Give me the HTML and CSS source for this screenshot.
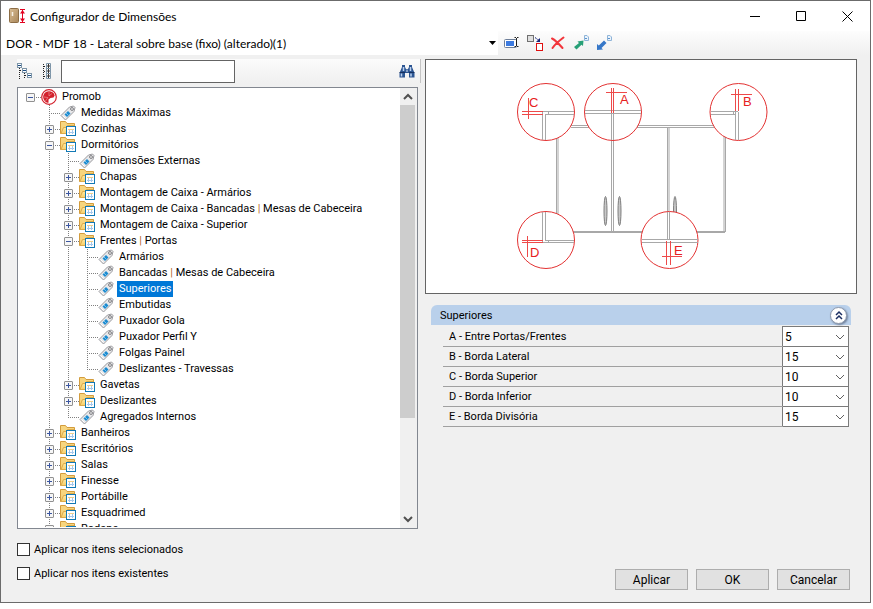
FILE: index.html
```html
<!DOCTYPE html>
<html lang="pt-BR">
<head>
  <meta charset="UTF-8">
  <title>Configurador de Dimensões</title>
  <meta name="viewport" content="width=device-width, initial-scale=1.0">
  <link rel="stylesheet" href="styles.css">
</head>
<body>
<svg class="sprites" aria-hidden="true">
  <defs>
    <linearGradient id="gold" x1="0" y1="0" x2="0" y2="1"><stop offset="0" stop-color="#fff0b8"/><stop offset="1" stop-color="#f8cf66"/></linearGradient>
    <linearGradient id="door" x1="0" y1="0" x2="1" y2="1"><stop offset="0" stop-color="#d9bd94"/><stop offset="1" stop-color="#a9875a"/></linearGradient>
  </defs>
  <symbol id="folder" viewBox="0 0 16 16">
    <path d="M.5 12.500V.5H5.500L7 2.500H14.500V12.500Z" fill="#f7d57e" stroke="#d39c3d"/>
    <path d="M1 12.500L3.500 6.500H6L7.500 4.500H14V12.500Z" fill="url(#gold)" stroke="#dcab4a"/>
    <rect x="6.500" y="5.500" width="9" height="9" fill="#fff" stroke="#1279b5"/>
    <path d="M8 11.500H14M9.500 8V13M12.500 8V13" stroke="#a5c8ec" fill="none"/>
    <path d="M8 8.500H14" stroke="#f0cf88"/>
  </symbol>
  <symbol id="tag" viewBox="0 0 16 16">
    <path d="M1 10.500L9.500 2L13.500 1L15 2.500L14 6.500L5.500 15Z" fill="#e8e8ea" stroke="#9a9a9e"/>
    <path d="M2.500 10.500L5.500 13.500" stroke="#fff"/>
    <path d="M4.500 9.500L8 6L10.500 8.500L7 12Z" fill="#1c8bd0"/>
    <path d="M6 8L8.500 10.500" stroke="#7cc1ea"/>
    <circle cx="12" cy="4" r="1.400" fill="#fff" stroke="#77777b"/>
  </symbol>
</svg>

<div class="window">
  <header class="titlebar">
    <svg class="app-icon" width="18" height="16" viewBox="0 0 18 16">
      <rect x=".5" y=".5" width="9" height="14" rx="1" fill="url(#door)" stroke="#8c6d45"/>
      <path d="M3.500 4V8" stroke="#f7f0e4" stroke-width="1.500"/>
      <path d="M11 1.500H16M11 14.500H16M13.500 2V14" stroke="#e2001f"/>
      <path d="M13.500 2L16 5.500H11ZM13.500 14L16 10.500H11Z" fill="#e2001f"/>
    </svg>
    <h1>Configurador de Dimensões</h1>
    <button class="win-btn" aria-label="Minimizar"><svg width="11" height="11"><path d="M0 5.500H10" stroke="#000"/></svg></button>
    <button class="win-btn" aria-label="Maximizar"><svg width="11" height="11"><path d="M.5 .5H9.500V9.500H.5Z" stroke="#000" fill="none"/></svg></button>
    <button class="win-btn" aria-label="Fechar"><svg width="11" height="11"><path d="M.5 .5L10.500 10.500M10.500 .5L.5 10.500" stroke="#000" fill="none"/></svg></button>
  </header>

  <div class="toolbar">
    <select class="model" aria-label="Modelo">
      <option>DOR - MDF 18 - Lateral sobre base (fixo) (alterado)(1)</option>
    </select>
    <button class="tool" aria-label="Renomear">
      <svg width="17" height="16" viewBox="0 0 17 16"><rect x=".5" y="4.500" width="12" height="8" rx="1" fill="#fff" stroke="#6e7f99"/><rect x="2" y="6" width="8" height="5" fill="#3d7be0"/><path d="M10.500 2.500H12M13 2.500H14.500M12.500 3V11M10.500 11.500H12M13 11.500H14.500" stroke="#222"/></svg>
    </button>
    <button class="tool" aria-label="Substituir">
      <svg width="17" height="16" viewBox="0 0 17 16"><rect x=".5" y=".5" width="6" height="6" fill="#e0e0e0" stroke="#707070"/><rect x="9.500" y="8.500" width="6" height="7" fill="#fff" stroke="#e01010"/><path d="M8 2.500L12 5.500" stroke="#16267c" stroke-dasharray="2 1"/><path d="M13 3V7H9Z" fill="#16267c"/></svg>
    </button>
    <button class="tool" aria-label="Excluir">
      <svg width="17" height="16" viewBox="0 0 17 16"><path d="M2 3.500C5 5 9 9 12.500 13M13.500 2.500C9 6 5 9 2.500 13" stroke="#f2363c" stroke-width="2" stroke-linecap="round" fill="none"/></svg>
    </button>
    <button class="tool" aria-label="Exportar">
      <svg width="17" height="16" viewBox="0 0 17 16"><path d="M1 12L6 8L4.500 6.500L10.500 5.500L10 11L8.500 9.800L3.500 14.500Z" fill="#27a077"/><path d="M11.500 .5H14L15.500 2V5.500H11.500Z" fill="#eaf3fc" stroke="#8fb4d8"/><path d="M12 3.500H14" stroke="#5c94cd"/></svg>
    </button>
    <button class="tool" aria-label="Importar">
      <svg width="17" height="16" viewBox="0 0 17 16"><path d="M1 15V9L2.800 10.500L8 5.500L10.500 8L5.500 13L7 14.500Z" fill="#3677c8"/><path d="M11.500 .5H14L15.500 2V5.500H11.500Z" fill="#eaf3fc" stroke="#8fb4d8"/><path d="M12 3.500H14" stroke="#5c94cd"/></svg>
    </button>
  </div>

  <main class="content">
    <section class="left">
      <div class="tree-bar">
        <button class="tool" aria-label="Recolher">
          <svg width="17" height="17" viewBox="0 0 17 17"><path d="M2.500 5V17M7.500 10V15" stroke="#222" stroke-dasharray="1 1"/><path d="M3 7.500H5M8 12.500H10" stroke="#222" stroke-dasharray="1 1"/><rect x=".5" y=".5" width="4" height="4" fill="#fff" stroke="#7d95a8"/><rect x="5.500" y="5.500" width="4" height="4" fill="#fff" stroke="#7d95a8"/><rect x="10.500" y="10.500" width="4" height="4" fill="#fff" stroke="#7d95a8"/><path d="M1 2.500H4M6 7.500H9M11 12.500H14" stroke="#1d4f86"/></svg>
        </button>
        <button class="tool" aria-label="Expandir">
          <svg width="17" height="17" viewBox="0 0 17 17"><path d="M4.500 1V16" stroke="#222" stroke-dasharray="1 1"/><path d="M5 3.500H7M5 8.500H7M5 13.500H7" stroke="#222" stroke-dasharray="1 1"/><path d="M7.500 .5H11.500V5.500H7.500ZM7.500 5.500H11.500V10.500H7.500ZM7.500 10.500H11.500V15.500H7.500Z" fill="#fff" stroke="#7d95a8"/><path d="M8 3H11M8 8H11M8 13H11M9.500 1V5M9.500 6V10M9.500 11V15" stroke="#333"/></svg>
        </button>
        <input class="search" type="text" aria-label="Pesquisar">
        <button class="tool find" aria-label="Localizar">
          <svg width="16" height="15" viewBox="0 0 16 15"><path d="M3 1H6V3L7 5H9L10 3V1H13V3L15.500 9V13.500H10V9H6V13.500H.5V9L3 3Z" fill="#2c5592"/><path d="M2.500 9.500V12.500M4.500 3V7M12 9.500V12.500M11.500 3V7" stroke="#bcd2f0" stroke-width="1.500"/><path d="M.5 8.500H6M10 8.500H15.500" stroke="#16305e"/><path d="M8 5.500V8" stroke="#dfe9f8"/></svg>
        </button>
      </div>

      <div class="tree-box">
        <ul class="tree">
          <li>
            <div class="row"><button class="exp open"></button>
              <svg class="ico" viewBox="0 0 16 16"><circle cx="8" cy="8" r="7.300" fill="#fff" stroke="#d3202c" stroke-width="1.200"/><path d="M8 2.200C4 2.200 2 5.300 2.200 8.500C2.500 11.500 5 13.800 7.500 13.800V10.500L9.500 9L12.500 8.500L13.700 6.500C13 3.500 10.500 2.200 8 2.200Z" fill="#d3202c"/><path d="M8 3V7L11 4.500M3 8L7 8.500L4.500 12" stroke="#f2a0a4" stroke-width=".6" fill="none"/></svg>
              <span class="label">Promob</span></div>
            <ul>
              <li><div class="row"><svg class="ico"><use href="#tag"/></svg><span class="label">Medidas Máximas</span></div></li>
              <li><div class="row"><button class="exp"></button><svg class="ico"><use href="#folder"/></svg><span class="label">Cozinhas</span></div></li>
              <li>
                <div class="row"><button class="exp open"></button><svg class="ico"><use href="#folder"/></svg><span class="label">Dormitórios</span></div>
                <ul>
                  <li><div class="row"><svg class="ico"><use href="#tag"/></svg><span class="label">Dimensões Externas</span></div></li>
                  <li><div class="row"><button class="exp"></button><svg class="ico"><use href="#folder"/></svg><span class="label">Chapas</span></div></li>
                  <li><div class="row"><button class="exp"></button><svg class="ico"><use href="#folder"/></svg><span class="label">Montagem de Caixa - Armários</span></div></li>
                  <li><div class="row"><button class="exp"></button><svg class="ico"><use href="#folder"/></svg><span class="label">Montagem de Caixa - Bancadas <i>|</i> Mesas de Cabeceira</span></div></li>
                  <li><div class="row"><button class="exp"></button><svg class="ico"><use href="#folder"/></svg><span class="label">Montagem de Caixa - Superior</span></div></li>
                  <li>
                    <div class="row"><button class="exp open"></button><svg class="ico"><use href="#folder"/></svg><span class="label">Frentes <i>|</i> Portas</span></div>
                    <ul>
                      <li><div class="row"><svg class="ico"><use href="#tag"/></svg><span class="label">Armários</span></div></li>
                      <li><div class="row"><svg class="ico"><use href="#tag"/></svg><span class="label">Bancadas <i>|</i> Mesas de Cabeceira</span></div></li>
                      <li><div class="row"><svg class="ico"><use href="#tag"/></svg><span class="label selected">Superiores</span></div></li>
                      <li><div class="row"><svg class="ico"><use href="#tag"/></svg><span class="label">Embutidas</span></div></li>
                      <li><div class="row"><svg class="ico"><use href="#tag"/></svg><span class="label">Puxador Gola</span></div></li>
                      <li><div class="row"><svg class="ico"><use href="#tag"/></svg><span class="label">Puxador Perfil Y</span></div></li>
                      <li><div class="row"><svg class="ico"><use href="#tag"/></svg><span class="label">Folgas Painel</span></div></li>
                      <li><div class="row"><svg class="ico"><use href="#tag"/></svg><span class="label">Deslizantes - Travessas</span></div></li>
                    </ul>
                  </li>
                  <li><div class="row"><button class="exp"></button><svg class="ico"><use href="#folder"/></svg><span class="label">Gavetas</span></div></li>
                  <li><div class="row"><button class="exp"></button><svg class="ico"><use href="#folder"/></svg><span class="label">Deslizantes</span></div></li>
                  <li><div class="row"><svg class="ico"><use href="#tag"/></svg><span class="label">Agregados Internos</span></div></li>
                </ul>
              </li>
              <li><div class="row"><button class="exp"></button><svg class="ico"><use href="#folder"/></svg><span class="label">Banheiros</span></div></li>
              <li><div class="row"><button class="exp"></button><svg class="ico"><use href="#folder"/></svg><span class="label">Escritórios</span></div></li>
              <li><div class="row"><button class="exp"></button><svg class="ico"><use href="#folder"/></svg><span class="label">Salas</span></div></li>
              <li><div class="row"><button class="exp"></button><svg class="ico"><use href="#folder"/></svg><span class="label">Finesse</span></div></li>
              <li><div class="row"><button class="exp"></button><svg class="ico"><use href="#folder"/></svg><span class="label">Portábille</span></div></li>
              <li><div class="row"><button class="exp"></button><svg class="ico"><use href="#folder"/></svg><span class="label">Esquadrimed</span></div></li>
              <li><div class="row"><button class="exp"></button><svg class="ico"><use href="#folder"/></svg><span class="label">Rodape</span></div></li>
            </ul>
          </li>
        </ul>
        <div class="scrollbar">
          <svg width="16" height="17"><path d="M4 11L8 7L12 11" stroke="#505050" stroke-width="2" fill="none"/></svg>
          <div class="track"><div class="thumb"></div></div>
          <svg width="16" height="17"><path d="M4 6L8 10L12 6" stroke="#505050" stroke-width="2" fill="none"/></svg>
        </div>
      </div>
    </section>

    <section class="right">
      <svg class="preview" viewBox="426 60 430 233">
        <g class="frame">
          <path d="M571 125.500H727M571 127.500H727M556.500 128V232M558 128V232M724 128V232M725.500 128V232M559 231.500H725M559 232.500H725"/>
          <path d="M611.500 128V232M613.500 128V232M667.500 127V232M669 127V232"/>
        </g>
        <g class="handle">
          <ellipse cx="605.500" cy="211" rx="1.500" ry="14.500"/>
          <ellipse cx="619.500" cy="211" rx="1.500" ry="14.500"/>
          <ellipse cx="675" cy="211" rx="1.500" ry="14.500"/>
        </g>
        <g class="lens">
          <circle cx="546" cy="112" r="28.500"/>
          <circle cx="613" cy="112" r="28.500"/>
          <circle cx="738.500" cy="112" r="28.500"/>
          <circle cx="546" cy="240" r="28.500"/>
          <circle cx="669.500" cy="240" r="28.500"/>
        </g>
        <g class="frame">
          <path d="M543 111.500H574M546 114.500H574M542.500 112V140M545.500 114V140M548.500 112V114"/>
          <path d="M585 110.500H641M585 113.500H641M611.500 113V140M613.500 113V140"/>
          <path d="M711 111.500H738M711 114.500H735M735.500 112V140M738.500 112V140M733.500 112V114"/>
          <path d="M543 242.500H574M546 240.500H574M542.500 212V242M545.500 212V241M548.500 240V242"/>
          <path d="M642 239.500H698M642 242.500H698M667.500 212V240M669.500 212V240"/>
        </g>
        <g class="mark">
          <path d="M522 111.500H543M522 114.500H543M528.500 98V119"/>
          <path d="M611.500 88V113M613.500 88V113M606 92.500H627"/>
          <path d="M735.500 89V111M738.500 89V111M731 94.500H752"/>
          <path d="M522 240.500H543M522 242.500H543M527.500 236V257"/>
          <path d="M666.500 241V265M670.500 241V265M662 256.500H682"/>
          <text x="529" y="107">C</text>
          <text x="620" y="104">A</text>
          <text x="743" y="106">B</text>
          <text x="530" y="257">D</text>
          <text x="674" y="255">E</text>
        </g>
      </svg>

      <div class="group">
        <h2>Superiores</h2>
        <button class="collapse" aria-label="Recolher grupo"><svg width="10" height="10"><path d="M2 5L5 2L8 5M2 9L5 6L8 9" stroke="#1c2f63" stroke-width="1.500" fill="none"/></svg></button>
      </div>
      <table class="props">
        <tr><th><label for="a">A - Entre Portas/Frentes</label></th><td><select id="a"><option>5</option></select></td></tr>
        <tr><th><label for="b">B - Borda Lateral</label></th><td><select id="b"><option>15</option></select></td></tr>
        <tr><th><label for="c">C - Borda Superior</label></th><td><select id="c"><option>10</option></select></td></tr>
        <tr><th><label for="d">D - Borda Inferior</label></th><td><select id="d"><option>10</option></select></td></tr>
        <tr><th><label for="e">E - Borda Divisória</label></th><td><select id="e"><option>15</option></select></td></tr>
      </table>
    </section>
  </main>

  <footer class="footer">
    <div class="checks">
      <label><input type="checkbox"> Aplicar nos itens selecionados</label>
      <label><input type="checkbox"> Aplicar nos itens existentes</label>
    </div>
    <div class="actions">
      <button>Aplicar</button>
      <button>OK</button>
      <button>Cancelar</button>
    </div>
  </footer>
</div>
</body>
</html>
```
FILE: styles.css
```css
* { box-sizing: border-box; }
body { margin: 0; padding: 0 2px 6px 0; height: 100vh; background: #fff; font-family: Roboto, "Liberation Sans", sans-serif; font-size: 11px; color: #000; }
button, select, input { font: inherit; color: inherit; margin: 0; }
svg { display: block; flex: none; }
.sprites { width: 0; height: 0; position: absolute; }

.window { display: flex; flex-direction: column; height: 100%; background: #f0f0f0; border: 1px solid #6b6b6b; }

.titlebar { display: flex; align-items: center; height: 30px; padding-left: 8px; background: #fff; }
.titlebar h1 { flex: 1; margin: 0 0 0 3px; font: 12px Lato, sans-serif; }
.win-btn { display: flex; align-items: center; justify-content: center; width: 46px; height: 28px; padding: 0; border: 0; background: none; }

.toolbar { display: flex; align-items: center; height: 24px; background: linear-gradient(#fdfdfd, #f0f0f0); }
.model {
  appearance: none; width: 497px; height: 24px; padding: 0 16px 0 5px; border: 0; border-radius: 0;
  font: 12px Lato, sans-serif;
  background: #fff url("data:image/svg+xml,%3Csvg xmlns='http://www.w3.org/2000/svg' width='7' height='4'%3E%3Cpath d='M0 0H7L3.5 4Z'/%3E%3C/svg%3E") no-repeat right 2px center;
}
.tool { display: flex; padding: 0; border: 0; background: none; }
.toolbar .tool { margin-left: 6px; }

.content { flex: 1; min-height: 0; display: grid; grid-template-columns: 404px 1fr; gap: 4px; padding: 4px 13px 0 16px; }
.left { display: flex; flex-direction: column; min-height: 0; }
.tree-bar { display: flex; align-items: center; gap: 5px; height: 24px; margin-bottom: 4px; padding-right: 5px; background: linear-gradient(#fbfbfb, #f0f0f0); border-right: 1px solid #c4c4c4; }
.search { width: 174px; height: 23px; padding: 0 4px; border: 1px solid #646464; background: #fff; }
.find { margin-left: auto; }

.tree-box { flex: 1; display: flex; min-height: 0; margin-right: 3px; border: 1px solid #828790; background: #fff; }
.tree { flex: 1; overflow: hidden; padding: 1px 0 0 8px; margin: 0 0 1px; list-style: none; }
.tree ul { padding: 0 0 0 19px; margin: 0; list-style: none; }
.tree ul > li { background: repeating-linear-gradient(#808080 0 1px, transparent 1px 2px) no-repeat 4px 0 / 1px 100%; }
.tree ul > li:last-child { background-size: 1px 8px; }
.row { display: flex; align-items: center; height: 16px; padding-left: 15px; background: repeating-linear-gradient(90deg, #808080 0 1px, transparent 1px 2px) no-repeat 4px 8px / 11px 1px; }
.exp { flex: none; width: 9px; height: 9px; margin: 0 6px 0 -15px; padding: 0; border: 1px solid #919191; border-radius: 1px; background: linear-gradient(#3b56a0, #3b56a0) no-repeat center / 5px 1px, linear-gradient(#3b56a0, #3b56a0) no-repeat center / 1px 5px, #f6f6f6; }
.exp.open { background: linear-gradient(#3b56a0, #3b56a0) no-repeat center / 5px 1px, #f6f6f6; }
.ico { width: 16px; height: 16px; margin-right: 3px; }
.label { padding: 0 2px; line-height: 16px; white-space: nowrap; }
.label i { font-style: normal; color: #b8692c; }
.selected { background: #0078d7; color: #fff; }

.scrollbar { display: flex; flex-direction: column; width: 17px; background: #f0f0f0; }
.track { flex: 1; }
.thumb { width: 15px; height: 77%; background: #cdcdcd; }

.right { display: flex; flex-direction: column; }
.preview { width: 100%; border: 1px solid #646464; background: #fff; }
.frame { stroke: #a8a8a8; fill: none; }
.handle { stroke: #7e7e7e; fill: #c8c8c8; }
.lens { stroke: #e33232; fill: #fff; }
.mark { stroke: #ee4a4a; fill: none; }
.mark text { font: 13px "Liberation Sans", sans-serif; fill: #e62020; stroke: none; }

.group { display: flex; align-items: center; height: 20px; margin: 11px 6px 0; padding: 0 4px 0 9px; border-radius: 6px 6px 0 0; background: #b9d0eb; }
.group h2 { flex: 1; margin: 0; font-size: 11px; font-weight: normal; }
.collapse { display: flex; align-items: center; justify-content: center; width: 17px; height: 17px; padding: 0; border: 1px solid #8d99ad; border-radius: 50%; background: #fff; box-shadow: 1px 1px 2px #6f7f99; }

.props { margin: 1px 8px 0 18px; border-collapse: collapse; }
.props th { height: 20px; padding: 0 0 0 6px; text-align: left; font-weight: normal; border-bottom: 1px solid #a0a0a0; }
.props td { width: 66px; padding: 0; border: 1px solid #7a7a7a; }
.props select {
  display: block; appearance: none; width: 100%; height: 19px; padding: 0 2px; border: 0; border-radius: 0; font-size: 12px;
  background: #fff url("data:image/svg+xml,%3Csvg xmlns='http://www.w3.org/2000/svg' width='10' height='6'%3E%3Cpath d='M1 1L5 5L9 1' fill='none' stroke='%23606060'/%3E%3C/svg%3E") no-repeat right 3px center;
}

.footer { display: flex; justify-content: space-between; align-items: flex-end; padding: 12px 20px 12px 16px; }
.checks { display: grid; gap: 8px; padding-bottom: 9px; }
.checks label { display: flex; align-items: center; gap: 4px; height: 16px; }
.checks input { appearance: none; width: 13px; height: 13px; border: 1px solid #333; background: #fff; }
.actions { display: flex; gap: 8px; }
.actions button { width: 73px; height: 21px; padding: 0; border: 1px solid #adadad; background: #e1e1e1; font-size: 12px; }
```
